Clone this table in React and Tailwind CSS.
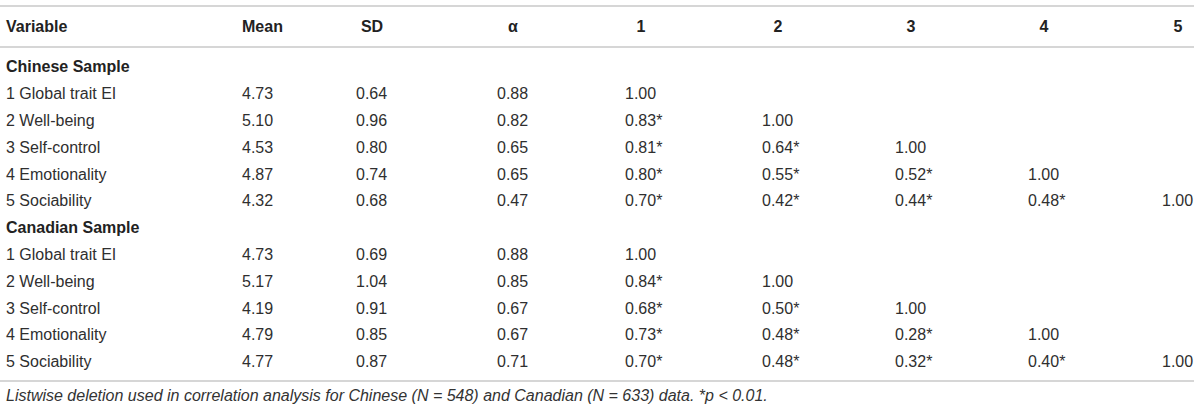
const cols = ['Mean', 'SD', 'α', '1', '2', '3', '4', '5'];

const sections = [
  {
    title: 'Chinese Sample',
    rows: [
      ['1 Global trait EI', '4.73', '0.64', '0.88', '1.00', '', '', '', ''],
      ['2 Well-being', '5.10', '0.96', '0.82', '0.83*', '1.00', '', '', ''],
      ['3 Self-control', '4.53', '0.80', '0.65', '0.81*', '0.64*', '1.00', '', ''],
      ['4 Emotionality', '4.87', '0.74', '0.65', '0.80*', '0.55*', '0.52*', '1.00', ''],
      ['5 Sociability', '4.32', '0.68', '0.47', '0.70*', '0.42*', '0.44*', '0.48*', '1.00'],
    ],
  },
  {
    title: 'Canadian Sample',
    rows: [
      ['1 Global trait EI', '4.73', '0.69', '0.88', '1.00', '', '', '', ''],
      ['2 Well-being', '5.17', '1.04', '0.85', '0.84*', '1.00', '', '', ''],
      ['3 Self-control', '4.19', '0.91', '0.67', '0.68*', '0.50*', '1.00', '', ''],
      ['4 Emotionality', '4.79', '0.85', '0.67', '0.73*', '0.48*', '0.28*', '1.00', ''],
      ['5 Sociability', '4.77', '0.87', '0.71', '0.70*', '0.48*', '0.32*', '0.40*', '1.00'],
    ],
  },
];

const grid = 'grid grid-cols-[242px_114px_141px_128px_137px_133px_133px_134px_32px] items-center';

export default function App() {
  return (
    <div className="w-[1200px] h-[411px] bg-white pt-[5px] text-[#2f2f2f]" style={{ fontFamily: '"Liberation Sans", Arial, sans-serif' }}>
      <div className="w-[1194px] border-t-2 border-b-2 border-[#d6d6d6]">
        {/* header */}
        <div className={`${grid} h-[39px] text-[16px] font-bold text-[#222]`}>
          <div className="pl-[6px]">Variable</div>
          {cols.map((c) => (
            <div key={c} className="w-[32px] text-center whitespace-nowrap">{c}</div>
          ))}
        </div>
      </div>

      <div className="w-[1194px] border-b-2 border-[#d6d6d6] pt-[6px] pb-[4px]">
        {sections.map((s) => (
          <div key={s.title}>
            <div className="h-[26.8px] flex items-center pl-[6px] text-[16px] font-bold text-[#222]">{s.title}</div>
            {s.rows.map((r, i) => (
              <div key={i} className={`${grid} h-[26.8px] text-[16px]`}>
                <div className="pl-[6px] whitespace-nowrap">{r[0]}</div>
                {r.slice(1).map((v, j) => (
                  <div key={j} className="whitespace-nowrap">{v}</div>
                ))}
              </div>
            ))}
          </div>
        ))}
      </div>

      <p className="pl-[6px] pt-[2px] text-[16px] italic text-[#333]">
        Listwise deletion used in correlation analysis for Chinese (N = 548) and Canadian (N = 633) data. *p &lt; 0.01.
      </p>
    </div>
  );
}
